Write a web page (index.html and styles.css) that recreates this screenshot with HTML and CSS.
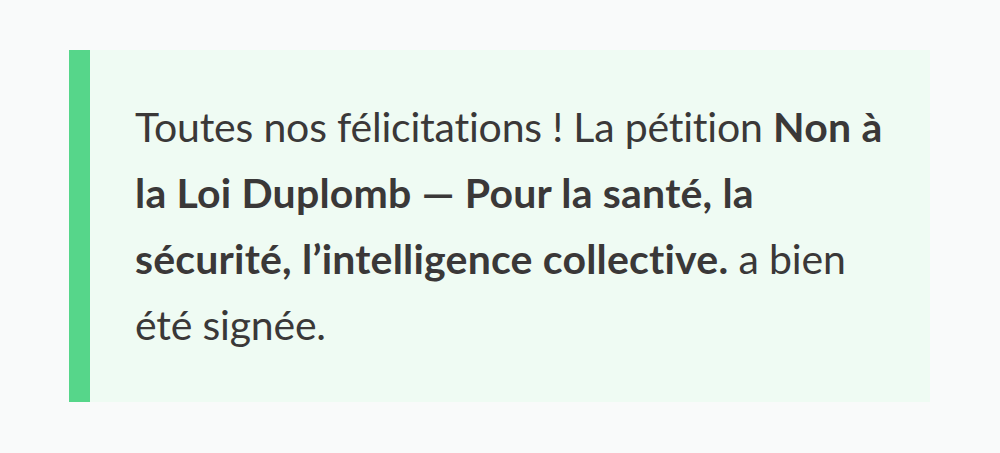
FILE: index.html
```html
<!DOCTYPE html>
<html lang="fr">
<head>
<meta charset="utf-8">
<link rel="stylesheet" href="styles.css">
</head>
<body>
<div class="page">
  <div class="notice">
    <p class="notice-text">Toutes nos félicitations ! La pétition <strong>Non à la Loi Duplomb — Pour la santé, la sécurité, l’intelligence collective.</strong> a bien été signée.</p>
  </div>
</div>
</body>
</html>
```
FILE: styles.css
```css
html, body {
  margin: 0;
  padding: 0;
  background: #f9fafa;
}
.page {
  padding-top: 50px;
  padding-left: 69px;
  padding-right: 70px;
}
.notice {
  background: #effbf3;
  border-left: 21px solid #56d68a;
  padding: 44px 44px 44px 45px;
}
.notice-text {
  margin: 0;
  font-family: Lato, "Noto Sans", sans-serif;
  font-size: 41px;
  line-height: 66px;
  color: #3a3838;
  font-variant-ligatures: none;
  letter-spacing: -0.2px;
}
.notice-text strong {
  font-weight: 700;
  letter-spacing: 0.2px;
}
```
